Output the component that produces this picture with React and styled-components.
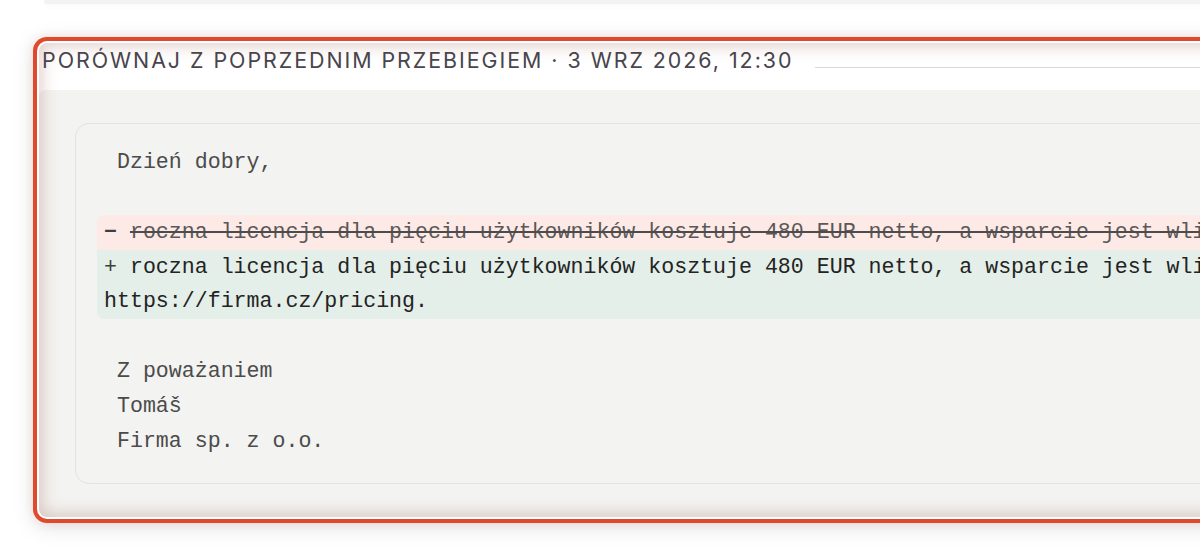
import React from "react";
import styled, { createGlobalStyle } from "styled-components";

const Global = createGlobalStyle`
  html, body { margin: 0; padding: 0; background: #ffffff; }
  body { overflow: hidden; }
`;

const Page = styled.div`
  width: 1200px;
  height: 560px;
  overflow: hidden;
  background: #ffffff;
`;

const PrevCard = styled.div`
  margin-left: 44px;
  width: 1400px;
  height: 4px;
  background: #f2f2f0;
  border-bottom-left-radius: 10px;
  box-shadow: 0 2px 6px rgba(0, 0, 0, 0.04);
`;

const Card = styled.section`
  position: relative;
  margin: 39px 0 0 39px;
  width: 1620px;
  background: #ffffff;
  border-radius: 8px;
  box-shadow: 0 0 0 2px #ffffff, 0 0 0 6px #df4a2e,
    0 0 10px 6px rgba(224, 73, 46, 0.12), 0 4px 22px 6px rgba(0, 0, 0, 0.12);

  &::after {
    content: "";
    position: absolute;
    inset: 0;
    border-radius: 8px;
    pointer-events: none;
    box-shadow: inset 0 0 16px 3px rgba(140, 70, 55, 0.26);
  }
`;

const Header = styled.header`
  display: flex;
  align-items: flex-start;
  gap: 22px;
  height: 47px;
  box-sizing: border-box;
  padding: 3px 0 0 3px;
`;

const Title = styled.h2`
  margin: 0;
  font-family: Inter, "Noto Sans", sans-serif;
  font-weight: 400;
  font-size: 21.4px;
  line-height: 28px;
  letter-spacing: 0.092em;
  text-transform: uppercase;
  color: #48454d;
  white-space: nowrap;
`;

const Rule = styled.div`
  flex: 1;
  height: 1px;
  margin-top: 21px;
  background: #d9d9d7;
`;

const Panel = styled.div`
  background: #f3f3f1;
  border-radius: 6px 6px 8px 8px;
  padding: 33px 35px 33px 36px;
`;

const Diff = styled.div`
  border: 1px solid #e2e2df;
  border-radius: 14px;
  padding: 21px 21px 24px 21px;
  font-family: "Liberation Mono", "DejaVu Sans Mono", monospace;
  font-size: 21.6px;
  line-height: 34.5px;
  color: #4b4b4b;
  white-space: pre-wrap;
`;

const Line = styled.div`
  padding: 0 7px;
  line-height: 35px;
  min-height: 35px;
`;

const ChangeGroup = styled.div`
  border-radius: 8px;
  overflow: hidden;
`;

const ChangeRow = styled.div`
  padding: 0 7px;
  background: ${(p) => (p.$kind === "del" ? "#fdeae7" : "#e3efe8")};
  color: ${(p) => (p.$kind === "del" ? "#5b5858" : "#232323")};
`;

const Sign = styled.span`
  color: #3e3e3e;
  font-weight: ${(p) => (p.$bold ? 700 : 400)};
`;

const Struck = styled.span`
  text-decoration: line-through;
  text-decoration-thickness: 2px;
  text-decoration-color: #4e4b4b;
`;

const OLD =
  "roczna licencja dla pięciu użytkowników kosztuje 480 EUR netto, a wsparcie jest wliczone w cenę.";
const NEW =
  "roczna licencja dla pięciu użytkowników kosztuje 480 EUR netto, a wsparcie jest wliczone w cenę. Szczegóły: https://firma.cz/pricing.";

export default function App() {
  return (
    <Page>
      <Global />
      <PrevCard />
      <Card>
        <Header>
          <Title>Porównaj z poprzednim przebiegiem · 3 wrz 2026, 12:30</Title>
          <Rule />
        </Header>
        <Panel>
          <Diff>
            <Line> Dzień dobry,</Line>
            <Line> </Line>
            <ChangeGroup>
              <ChangeRow $kind="del">
                <Sign $bold>−</Sign> <Struck>{OLD}</Struck>
              </ChangeRow>
              <ChangeRow $kind="add">
                <Sign>+</Sign> {NEW}
              </ChangeRow>
            </ChangeGroup>
            <Line> </Line>
            <Line> Z poważaniem</Line>
            <Line> Tomáš</Line>
            <Line> Firma sp. z o.o.</Line>
          </Diff>
        </Panel>
      </Card>
    </Page>
  );
}
